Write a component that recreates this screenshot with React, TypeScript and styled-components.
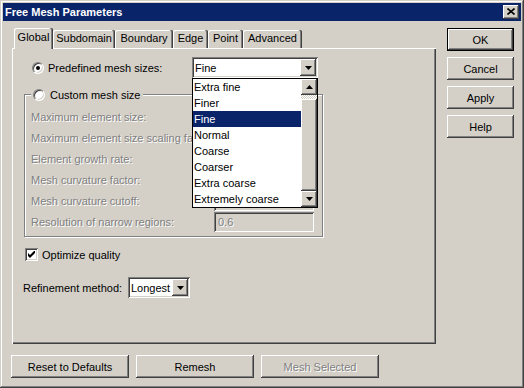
import styled, { createGlobalStyle } from "styled-components";

const face = "#d4d0c8";
const shade = "#808080";
const dark = "#404040";
const light = "#ffffff";
const navy = "#0a246a";

const raised = `box-shadow: inset -1px -1px ${dark}, inset 1px 1px ${light}, inset -2px -2px ${shade}, inset 2px 2px ${face};`;
const sunken = `box-shadow: inset 1px 1px ${shade}, inset -1px -1px ${light}, inset 2px 2px ${dark}, inset -2px -2px ${face};`;
const greyed = `color: ${shade}; text-shadow: 1px 1px 0 ${light};`;

const GlobalStyle = createGlobalStyle`
    html, body {
        margin: 0;
        padding: 0;
        background: ${face};
    }
    body {
        font-family: "Liberation Sans", Arial, sans-serif;
        font-size: 11px;
        color: #000;
    }
    * {
        box-sizing: border-box;
    }
`;

const Window = styled.div`
    width: 524px;
    height: 388px;
    padding: 3px;
    background: ${face};
    box-shadow: inset -1px -1px ${dark}, inset 1px 1px ${face}, inset -2px -2px ${shade}, inset 2px 2px ${light};
    display: flex;
    flex-direction: column;
`;

const TitleBar = styled.div`
    height: 18px;
    background: ${navy};
    color: #fff;
    font-weight: bold;
    display: flex;
    align-items: center;
    justify-content: space-between;
    padding: 0 2px;
`;

const CloseButton = styled.div`
    width: 16px;
    height: 14px;
    background: ${face};
    ${raised}
    display: flex;
    align-items: center;
    justify-content: center;
    padding: 0 1px 1px 0;
`;

const Body = styled.div`
    display: flex;
    gap: 11px;
    padding: 7px 0 0 9px;
`;

const MainColumn = styled.div`
    width: 424px;
    display: flex;
    flex-direction: column;
`;

const SideColumn = styled.div`
    width: 67px;
    display: flex;
    flex-direction: column;
    gap: 6px;
`;

const TabStrip = styled.div`
    height: 20px;
    display: flex;
    align-items: flex-end;
    padding-left: 2px;
`;

const Tab = styled.div<{ $w: number; $active?: boolean }>`
    width: ${(p) => p.$w}px;
    height: ${(p) => (p.$active ? 21 : 18)}px;
    margin-bottom: ${(p) => (p.$active ? -1 : 0)}px;
    position: relative;
    z-index: ${(p) => (p.$active ? 1 : 0)};
    background: ${face};
    border-radius: 2px 2px 0 0;
    box-shadow: inset -1px 0 ${dark}, inset -2px 0 ${shade}, inset 1px 1px ${light};
    display: flex;
    justify-content: center;
    padding-top: ${(p) => (p.$active ? 3 : 2)}px;
    white-space: nowrap;
`;

const Panel = styled.div`
    height: 296px;
    background: ${face};
    box-shadow: inset 1px 1px ${light}, inset -1px -1px ${dark}, inset -2px -2px ${shade};
    padding-top: 9px;
    display: flex;
    flex-direction: column;
`;

const PredefRow = styled.div`
    height: 21px;
    display: flex;
    align-items: center;
    padding-left: 20px;
`;

const Radio = styled.span<{ $checked?: boolean }>`
    width: 12px;
    height: 12px;
    flex-shrink: 0;
    border-radius: 50%;
    background: ${light};
    border: 1px solid;
    border-color: ${shade} ${light} ${light} ${shade};
    box-shadow: inset 1px 1px ${dark}, inset -1px -1px ${face};
    display: flex;
    align-items: center;
    justify-content: center;
    &::after {
        content: "";
        width: 4px;
        height: 4px;
        border-radius: 50%;
        background: ${(p) => (p.$checked ? "#000" : "transparent")};
    }
`;

const OptionLabel = styled.span<{ $w?: number; $gap?: number }>`
    margin-left: ${(p) => p.$gap ?? 4}px;
    width: ${(p) => (p.$w ? `${p.$w}px` : "auto")};
    white-space: nowrap;
`;

const Combo = styled.div<{ $w: number }>`
    position: relative;
    width: ${(p) => p.$w}px;
    height: 21px;
    background: ${light};
    ${sunken}
    display: flex;
    align-items: center;
    padding: 2px;
`;

const ComboText = styled.span`
    flex: 1;
    padding-left: 1px;
    white-space: nowrap;
`;

const ArrowButton = styled.div<{ $h?: number }>`
    width: 16px;
    height: ${(p) => p.$h ?? 17}px;
    flex-shrink: 0;
    background: ${face};
    ${raised}
    display: flex;
    align-items: center;
    justify-content: center;
`;

const DropList = styled.div`
    position: absolute;
    top: 21px;
    left: 0;
    width: 126px;
    height: 130px;
    background: ${light};
    border: 1px solid #000;
    display: flex;
    z-index: 5;
`;

const ListItems = styled.div`
    flex: 1;
    display: flex;
    flex-direction: column;
`;

const ListItem = styled.div<{ $selected?: boolean }>`
    height: 16px;
    line-height: 16px;
    padding-left: 1px;
    white-space: nowrap;
    background: ${(p) => (p.$selected ? navy : "transparent")};
    color: ${(p) => (p.$selected ? "#fff" : "#000")};
`;

const ScrollBar = styled.div`
    width: 16px;
    display: flex;
    flex-direction: column;
`;

const ScrollTrack = styled.div`
    flex: 1;
    display: flex;
    flex-direction: column;
    padding-top: 4px;
    background: repeating-conic-gradient(${light} 0 25%, ${face} 0 50%) 0 0 / 2px 2px;
`;

const ScrollThumb = styled.div`
    flex: 1;
    background: ${face};
    ${raised}
`;

const GroupBox = styled.div`
    position: relative;
    margin: 16px 0 0 12px;
    width: 299px;
    height: 143px;
    border: 1px solid ${shade};
    box-shadow: inset 1px 1px ${light}, 1px 1px ${light};
    padding: 11px 0 0 6px;
`;

const Legend = styled.div`
    position: absolute;
    top: -8px;
    left: 6px;
    height: 15px;
    padding: 0 3px 0 2px;
    background: ${face};
    display: flex;
    align-items: center;
`;

const ParamRow = styled.div`
    height: 21px;
    display: flex;
    align-items: center;
`;

const ParamLabel = styled.span`
    width: 183px;
    flex-shrink: 0;
`;

// the open list covers the tail of long labels, so clip them at its left edge
const ParamText = styled.span`
    display: block;
    max-width: 161px;
    overflow: hidden;
    white-space: nowrap;
    ${greyed}
`;

const TextField = styled.div`
    width: 100px;
    height: 20px;
    background: ${face};
    ${sunken}
    padding: 0 4px;
    display: flex;
    align-items: center;
    ${greyed}
`;

const CheckRow = styled.div`
    margin: 11px 0 0 13px;
    height: 13px;
    display: flex;
    align-items: center;
`;

const CheckBox = styled.span`
    width: 13px;
    height: 13px;
    background: ${light};
    ${sunken}
    display: flex;
    align-items: center;
    justify-content: center;
`;

const RefineRow = styled.div`
    margin: 16px 0 0 11px;
    height: 21px;
    display: flex;
    align-items: center;
`;

const RefineLabel = styled.span`
    width: 105px;
    white-space: nowrap;
`;

const ButtonRow = styled.div`
    display: flex;
    gap: 7px;
    margin: 11px 0 0 -1px;
`;

const DialogButton = styled.button<{ $w: number; $default?: boolean; $off?: boolean }>`
    width: ${(p) => p.$w}px;
    height: 23px;
    padding: 0;
    font: inherit;
    background: ${face};
    border: ${(p) => (p.$default ? "1px solid #000" : "none")};
    ${raised}
    ${(p) => (p.$off ? greyed : "color: #000;")}
`;

const DownArrow = () => (
    <svg width="7" height="4" viewBox="0 0 7 4">
        <polygon points="0,0 7,0 3.5,4" fill="#000" />
    </svg>
);

const UpArrow = () => (
    <svg width="7" height="4" viewBox="0 0 7 4">
        <polygon points="0,4 7,4 3.5,0" fill="#000" />
    </svg>
);

const tabs = [
    { label: "Global", w: 39 },
    { label: "Subdomain", w: 62 },
    { label: "Boundary", w: 58 },
    { label: "Edge", w: 35 },
    { label: "Point", w: 35 },
    { label: "Advanced", w: 59 },
];

const sizes = ["Extra fine", "Finer", "Fine", "Normal", "Coarse", "Coarser", "Extra coarse", "Extremely coarse"];

const params = [
    { label: "Maximum element size:", value: "" },
    { label: "Maximum element size scaling factor:", value: "" },
    { label: "Element growth rate:", value: "" },
    { label: "Mesh curvature factor:", value: "" },
    { label: "Mesh curvature cutoff:", value: "" },
    { label: "Resolution of narrow regions:", value: "0.6" },
];

function App() {
    return (
        <Window>
            <GlobalStyle />
            <TitleBar>
                <span>Free Mesh Parameters</span>
                <CloseButton>
                    <svg width="8" height="7" viewBox="0 0 8 7">
                        <path d="M0.5 0.5 L7.5 6.5 M7.5 0.5 L0.5 6.5" stroke="#000" strokeWidth="1.6" />
                    </svg>
                </CloseButton>
            </TitleBar>
            <Body>
                <MainColumn>
                    <TabStrip>
                        {tabs.map((t, i) => (
                            <Tab key={t.label} $w={t.w} $active={i === 0}>{t.label}</Tab>
                        ))}
                    </TabStrip>
                    <Panel>
                        <PredefRow>
                            <Radio $checked />
                            <OptionLabel $w={144}>Predefined mesh sizes:</OptionLabel>
                            <Combo $w={126}>
                                <ComboText>Fine</ComboText>
                                <ArrowButton><DownArrow /></ArrowButton>
                                <DropList>
                                    <ListItems>
                                        {sizes.map((s) => (
                                            <ListItem key={s} $selected={s === "Fine"}>{s}</ListItem>
                                        ))}
                                    </ListItems>
                                    <ScrollBar>
                                        <ArrowButton $h={16}><UpArrow /></ArrowButton>
                                        <ScrollTrack>
                                            <ScrollThumb />
                                        </ScrollTrack>
                                        <ArrowButton $h={16}><DownArrow /></ArrowButton>
                                    </ScrollBar>
                                </DropList>
                            </Combo>
                        </PredefRow>
                        <GroupBox>
                            <Legend>
                                <Radio />
                                <OptionLabel $gap={5}>Custom mesh size</OptionLabel>
                            </Legend>
                            {params.map((p) => (
                                <ParamRow key={p.label}>
                                    <ParamLabel>
                                        <ParamText>{p.label}</ParamText>
                                    </ParamLabel>
                                    <TextField>{p.value}</TextField>
                                </ParamRow>
                            ))}
                        </GroupBox>
                        <CheckRow>
                            <CheckBox>
                                <svg width="7" height="7" viewBox="0 0 7 7">
                                    <path d="M0 2 L2 4 L7 -1 L7 2 L2 7 L0 5 Z" fill="#000" />
                                </svg>
                            </CheckBox>
                            <OptionLabel>Optimize quality</OptionLabel>
                        </CheckRow>
                        <RefineRow>
                            <RefineLabel>Refinement method:</RefineLabel>
                            <Combo $w={62}>
                                <ComboText>Longest</ComboText>
                                <ArrowButton><DownArrow /></ArrowButton>
                            </Combo>
                        </RefineRow>
                    </Panel>
                    <ButtonRow>
                        <DialogButton $w={118}>Reset to Defaults</DialogButton>
                        <DialogButton $w={118}>Remesh</DialogButton>
                        <DialogButton $w={118} $off>Mesh Selected</DialogButton>
                    </ButtonRow>
                </MainColumn>
                <SideColumn>
                    <DialogButton $w={67} $default>OK</DialogButton>
                    <DialogButton $w={67}>Cancel</DialogButton>
                    <DialogButton $w={67}>Apply</DialogButton>
                    <DialogButton $w={67}>Help</DialogButton>
                </SideColumn>
            </Body>
        </Window>
    );
}

export default App;
